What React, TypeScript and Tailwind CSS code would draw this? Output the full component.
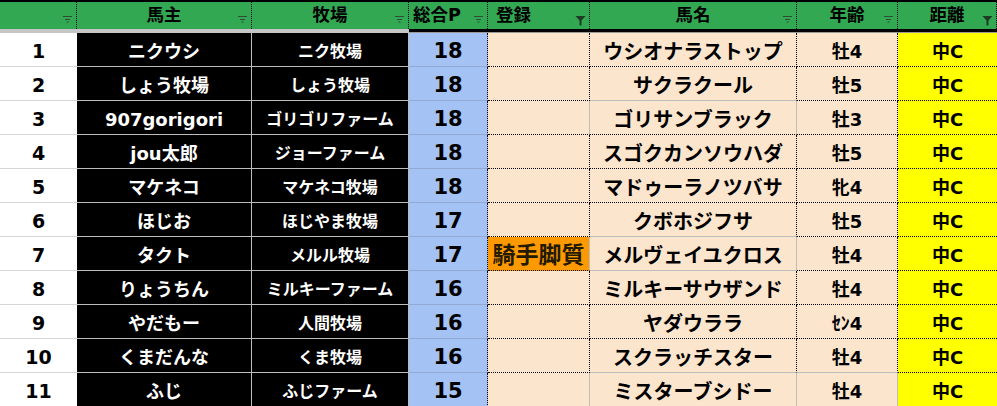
const rows = [
  { no: 1, owner: 'ニクウシ', farm: 'ニク牧場', p: 18, reg: '', horse: 'ウシオナラストップ', age: '牡4', dist: '中C' },
  { no: 2, owner: 'しょう牧場', farm: 'しょう牧場', p: 18, reg: '', horse: 'サクラクール', age: '牡5', dist: '中C' },
  { no: 3, owner: '907gorigori', farm: 'ゴリゴリファーム', p: 18, reg: '', horse: 'ゴリサンブラック', age: '牡3', dist: '中C' },
  { no: 4, owner: 'jou太郎', farm: 'ジョーファーム', p: 18, reg: '', horse: 'スゴクカンソウハダ', age: '牡5', dist: '中C' },
  { no: 5, owner: 'マケネコ', farm: 'マケネコ牧場', p: 18, reg: '', horse: 'マドゥーラノツバサ', age: '牝4', dist: '中C' },
  { no: 6, owner: 'ほじお', farm: 'ほじやま牧場', p: 17, reg: '', horse: 'クボホジフサ', age: '牡5', dist: '中C' },
  { no: 7, owner: 'タクト', farm: 'メルル牧場', p: 17, reg: '騎手脚質', horse: 'メルヴェイユクロス', age: '牡4', dist: '中C' },
  { no: 8, owner: 'りょうちん', farm: 'ミルキーファーム', p: 16, reg: '', horse: 'ミルキーサウザンド', age: '牡4', dist: '中C' },
  { no: 9, owner: 'やだもー', farm: '人間牧場', p: 16, reg: '', horse: 'ヤダウララ', age: 'ｾﾝ4', dist: '中C' },
  { no: 10, owner: 'くまだんな', farm: 'くま牧場', p: 16, reg: '', horse: 'スクラッチスター', age: '牡4', dist: '中C' },
  { no: 11, owner: 'ふじ', farm: 'ふじファーム', p: 15, reg: '', horse: 'ミスターブシドー', age: '牡4', dist: '中C' },
];

// excel-ish borders: dotted black by default, plain gridline where the cell has none
const RD = '[border-right:1px_dotted_#000]';
const RG = '[border-right:1px_solid_#bdbdbd]';
const BD = '[border-bottom:1px_dotted_#000]';
const BG = '[border-bottom:1px_solid_#bdbdbd]';

const plainSide = [3, 7, 11];
const plainBottomName = [2, 6, 7, 10];

function SortIcon() {
  return (
    <svg width="11" height="8" viewBox="0 0 11 8" className="shrink-0">
      <path d="M1 1.5h9M3 4.5h5M4.5 7h2" stroke="#2f4a36" strokeWidth="1.2" />
    </svg>
  );
}

function FilterIcon() {
  return (
    <svg width="11" height="11" viewBox="0 0 11 11" className="shrink-0">
      <path d="M0.5 1h10l-4 4.5v5h-2v-5z" fill="#1d3a24" />
    </svg>
  );
}

function Head({ w, label, active, pad }: { w: string; label?: string; active?: boolean; pad?: string }) {
  return (
    <div className={`${w} relative h-full flex items-center ${pad ?? 'justify-center'} [border-right:1px_dotted_#000]`}>
      {label && <span className="text-[17.5px] font-bold text-black leading-none">{label}</span>}
      <div className="absolute right-[3px] top-[13px]">{active ? <FilterIcon /> : <SortIcon />}</div>
    </div>
  );
}

export default function App() {
  return (
    <div className="w-[997px] h-[406px] overflow-hidden bg-white font-['DejaVu_Sans','Noto_Sans_CJK_JP',sans-serif] font-bold">
      <div className="flex h-[29px] bg-[#33a852] border-t-2 border-black">
        <Head w="w-[77px]" />
        <Head w="w-[175px]" label="馬主" />
        <Head w="w-[157px]" label="牧場" />
        <Head w="w-[79px]" label="総合P" pad="justify-start pl-[4px]" />
        <Head w="w-[102px]" label="登録" active pad="justify-start pl-[8px]" />
        <Head w="w-[207px]" label="馬名" />
        <Head w="w-[101px]" label="年齢" />
        <Head w="w-[99px]" label="距離" active />
      </div>
      <div className="flex h-[4px]">
        <div className="w-[409px] bg-[#c6c6c6]" />
        <div className="flex-1 bg-black border-b border-[#9a9a9a]" />
      </div>
      {rows.map((r) => {
        const side = plainSide.includes(r.no);
        return (
          <div key={r.no} className="flex h-[34px] leading-none">
            <div className="w-[77px] flex items-center justify-center pt-[4px] bg-white text-[19px] text-black border-b border-[#d6d6d6]">
              {r.no}
            </div>
            <div className={`w-[175px] flex items-center justify-center pt-[4px] bg-black text-white text-[18px] ${RG} ${BG}`}>
              {r.owner}
            </div>
            <div className={`w-[157px] flex items-center justify-center pt-[4px] bg-black text-white text-[16px] ${RG} ${BG}`}>
              {r.farm}
            </div>
            <div className={`w-[79px] flex items-center justify-center pt-[4px] bg-[#a4c2f4] text-black text-[21px] ${RD} [border-bottom:1px_solid_#93a9d2]`}>
              {r.p}
            </div>
            <div
              className={`w-[102px] flex items-center justify-center pt-[3px] whitespace-nowrap text-[#231a00] text-[23px] ${
                r.reg ? 'bg-[#ff9900]' : 'bg-[#fce5cd]'
              } ${side ? RG : RD} ${BD}`}
            >
              {r.reg}
            </div>
            <div
              className={`w-[207px] flex items-center justify-center pt-[4px] whitespace-nowrap bg-[#fce5cd] text-black text-[20px] ${side ? RG : RD} ${
                plainBottomName.includes(r.no) ? BG : BD
              }`}
            >
              {r.horse}
            </div>
            <div
              className={`w-[101px] flex items-center justify-center pt-[4px] bg-[#fce5cd] text-black text-[18px] ${r.no === 11 ? RG : RD} ${
                r.no === 10 ? BG : BD
              }`}
            >
              {r.age}
            </div>
            <div className={`w-[99px] flex items-center justify-center pt-[4px] bg-[#ffff00] text-black text-[18px] ${BD}`}>
              {r.dist}
            </div>
          </div>
        );
      })}
    </div>
  );
}
